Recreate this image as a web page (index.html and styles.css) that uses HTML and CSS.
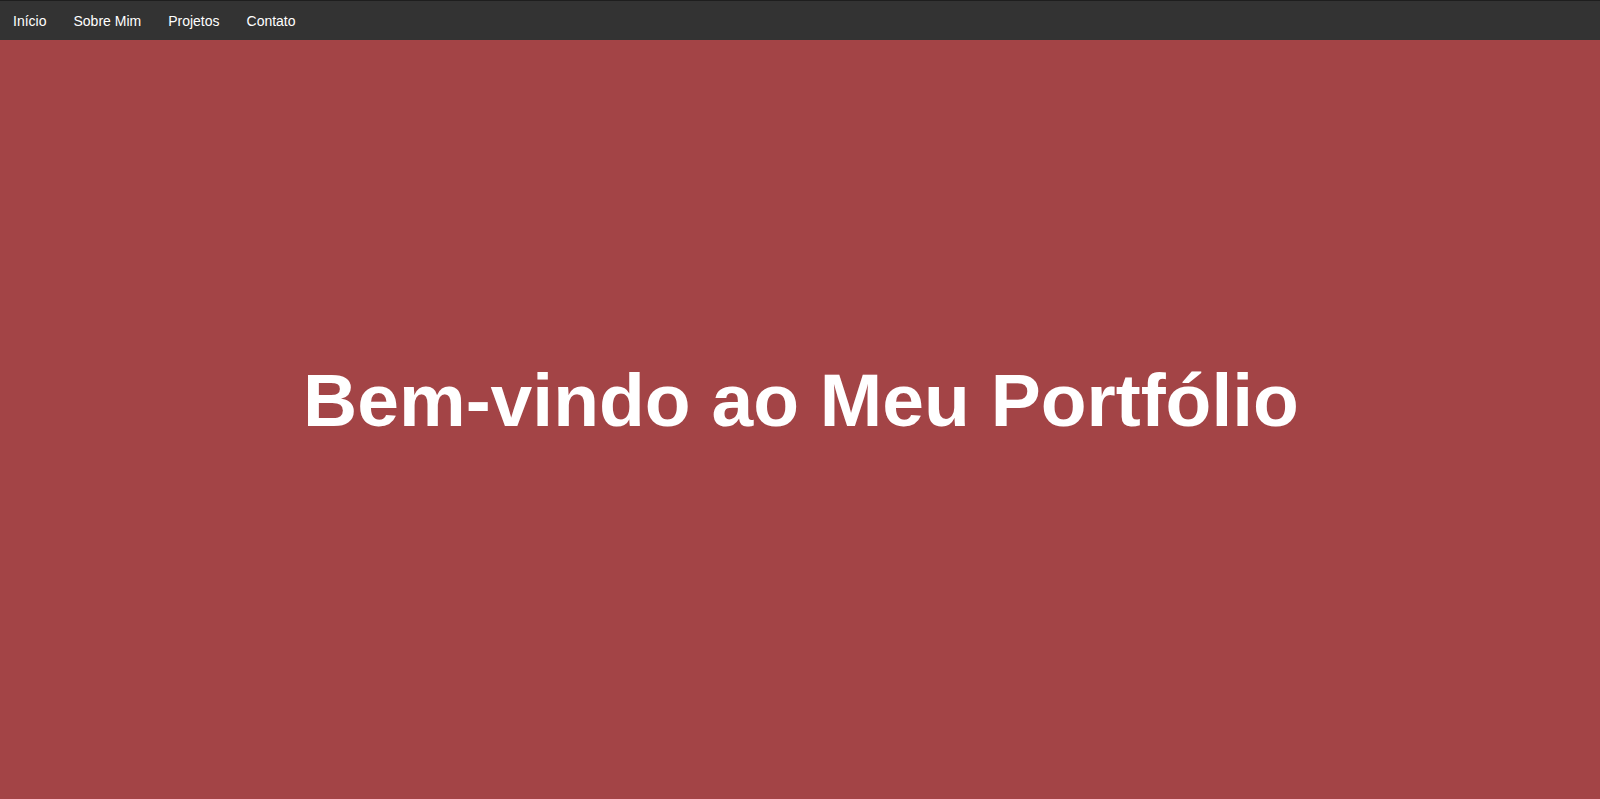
FILE: index.html
```html
<!DOCTYPE html>
<html lang="pt-BR">
<head>
<meta charset="utf-8">
<title>Meu Portfólio</title>
<link rel="stylesheet" href="styles.css">
</head>
<body>
<nav class="topnav">
  <a href="#inicio" class="nav-link">Início</a>
  <a href="#sobre" class="nav-link">Sobre Mim</a>
  <a href="#projetos" class="nav-link">Projetos</a>
  <a href="#contato" class="nav-link">Contato</a>
</nav>
<section class="hero" id="inicio">
  <h1 class="hero-title">Bem-vindo ao Meu Portfólio</h1>
</section>
</body>
</html>
```
FILE: styles.css
```css
html, body {
  margin: 0;
  padding: 0;
  height: 100%;
  overflow: hidden;
}
body {
  font-family: "Liberation Sans", Arial, sans-serif;
  background: #a34446;
}
.topnav {
  display: flex;
  align-items: center;
  gap: 27px;
  height: 39px;
  padding: 0 13px;
  background: #333333;
  border-top: 1px solid #1e1e1e;
}
.nav-link {
  color: #ffffff;
  text-decoration: none;
  font-size: 14px;
}
.hero {
  display: flex;
  align-items: center;
  justify-content: center;
  height: calc(100vh - 40px);
  box-sizing: border-box;
  padding-bottom: 40px;
  padding-left: 2px;
  background: #a34446;
}
.hero-title {
  margin: 0;
  color: #ffffff;
  font-size: 75px;
  font-weight: bold;
}
```
